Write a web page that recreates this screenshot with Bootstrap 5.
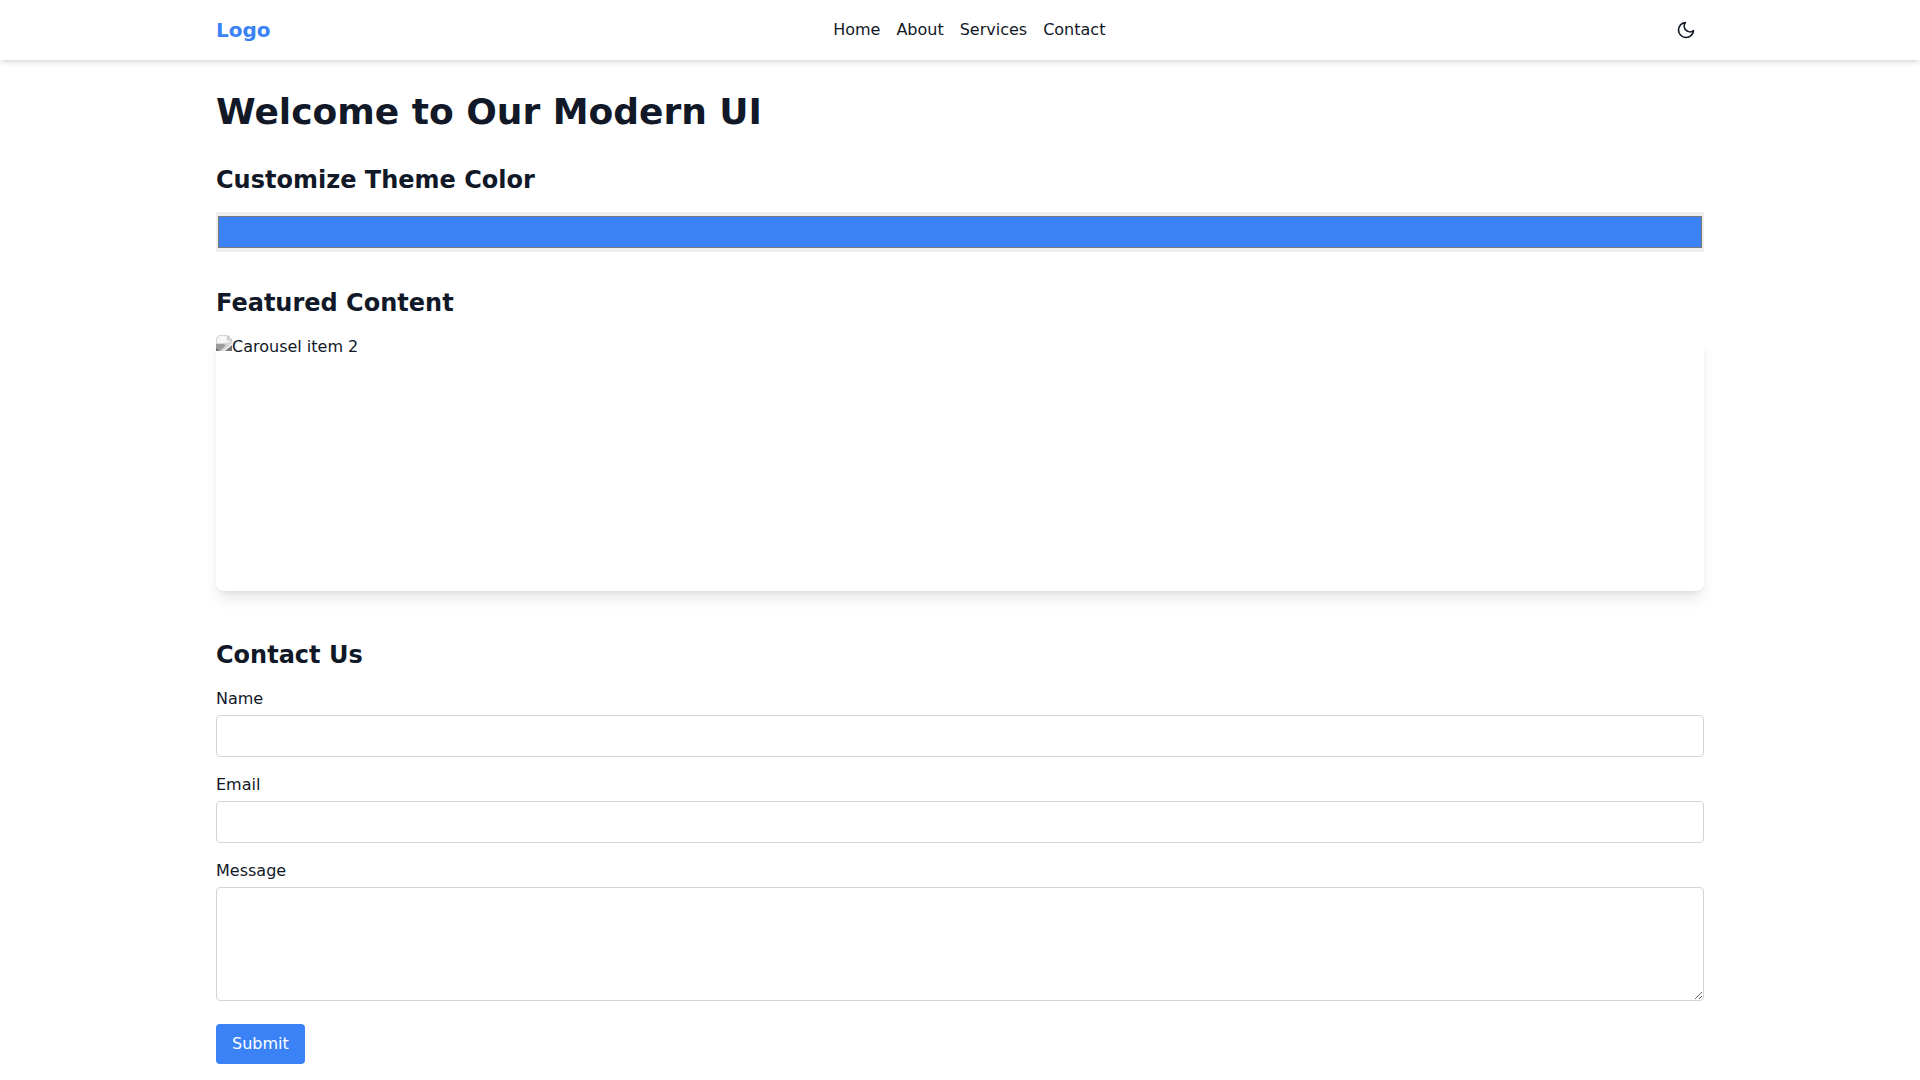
<!DOCTYPE html>
<html lang="en">
<head>
    <meta charset="UTF-8">
    <meta name="viewport" content="width=device-width, initial-scale=1.0">
    <title>Modern UI</title>
    <link href="https://cdn.jsdelivr.net/npm/bootstrap@5.3.0/dist/css/bootstrap.min.css" rel="stylesheet">
    <style>
        body {
            font-family: "DejaVu Sans", sans-serif;
            font-size: 16px;
            line-height: 24px;
            color: #111827;
            background-color: #fff;
        }
        .page-wrap {
            width: 100%;
            max-width: 1536px;
            margin: 0 auto;
            padding: 0 24px;
        }
        .top-bar {
            height: 60px;
            padding: 0;
            background-color: #fff;
            box-shadow: 0 4px 6px -1px rgba(0, 0, 0, 0.1), 0 2px 4px -2px rgba(0, 0, 0, 0.1);
        }
        .brand-logo {
            font-size: 20px;
            line-height: 28px;
            font-weight: 700;
            color: #3b82f6;
            padding: 0;
            margin: 0;
        }
        .top-links {
            gap: 16px;
        }
        .top-links .nav-link {
            padding: 0;
            color: #111827;
        }
        .theme-toggle {
            padding: 8px;
            border: 0;
            background: none;
            line-height: 0;
            color: #111827;
        }
        .main-area {
            padding-top: 32px;
            padding-bottom: 16px;
        }
        .page-title {
            font-size: 36px;
            line-height: 40px;
            font-weight: 700;
            margin-bottom: 32px;
        }
        .block-title {
            font-size: 24px;
            line-height: 32px;
            font-weight: 700;
            margin-bottom: 16px;
        }
        .theme-picker {
            display: block;
            width: 100%;
            height: 40px;
            margin-bottom: 35px;
            padding: 4px 2px;
            border: 0;
            background-color: #efefef;
            cursor: pointer;
        }
        .slide-box {
            height: 256px;
            margin-bottom: 48px;
            border-radius: 8px;
            background-color: #fff;
            box-shadow: 0 10px 15px -3px rgba(0, 0, 0, 0.1), 0 4px 6px -4px rgba(0, 0, 0, 0.1);
        }
        .broken-pic {
            flex: none;
            display: block;
        }
        .field-block {
            margin-bottom: 16px;
        }
        .field-block .form-label {
            margin-bottom: 4px;
        }
        .field-block .form-control {
            height: 42px;
            padding: 8px 12px;
            border-color: #d1d5db;
            border-radius: 4px;
            font-size: 16px;
            line-height: 24px;
            color: #111827;
        }
        .field-block textarea.form-control {
            height: 114px;
        }
        .last-field {
            margin-bottom: 23px;
        }
        .submit-btn {
            display: block;
            height: 40px;
            padding: 8px 16px;
            border: 0;
            border-radius: 4px;
            font-size: 16px;
            line-height: 24px;
            color: #fff;
            background-color: #3b82f6;
        }
    </style>
</head>
<body>
    <nav class="navbar top-bar">
        <div class="page-wrap d-flex align-items-center justify-content-between">
            <a class="navbar-brand brand-logo" href="#">Logo</a>
            <ul class="nav top-links">
                <li class="nav-item"><a class="nav-link" href="#">Home</a></li>
                <li class="nav-item"><a class="nav-link" href="#">About</a></li>
                <li class="nav-item"><a class="nav-link" href="#">Services</a></li>
                <li class="nav-item"><a class="nav-link" href="#">Contact</a></li>
            </ul>
            <button class="theme-toggle" type="button" aria-label="Toggle theme">
                <svg width="20" height="20" viewBox="0 0 24 24" fill="none" stroke="currentColor" stroke-width="2" stroke-linecap="round" stroke-linejoin="round">
                    <path d="M21 12.79A9 9 0 1 1 11.21 3 7 7 0 0 0 21 12.79z"/>
                </svg>
            </button>
        </div>
    </nav>

    <main class="page-wrap main-area">
        <h1 class="page-title">Welcome to Our Modern UI</h1>

        <h2 class="block-title">Customize Theme Color</h2>
        <input class="theme-picker" type="color" value="#3b82f6" aria-label="Theme color">

        <h2 class="block-title">Featured Content</h2>
        <div class="slide-box d-flex align-items-start">
            <svg class="broken-pic" width="16" height="16" viewBox="0 0 16 16">
                <path d="M0 16V3L3 0H12L16 5V8L8 16Z" fill="#d4d4d4"/>
                <path d="M1 8V3.5L3.5 1H11V5.5H15V7L8 8L5 8Z" fill="#f6f6f6"/>
                <path d="M12 1L15.5 5H12Z" fill="#fff" stroke="#a9a9a9" stroke-width="0.7"/>
                <path d="M0 9H7L10 10L4 16H0Z" fill="#9a9a9a"/>
                <path d="M0 13L3 16H0Z" fill="#6e6e6e"/>
                <path d="M9 16L16 10V16Z" fill="#757575"/>
            </svg>
            <span>Carousel item 2</span>
        </div>

        <h2 class="block-title">Contact Us</h2>
        <form>
            <div class="field-block">
                <label class="form-label" for="nameField">Name</label>
                <input class="form-control" id="nameField" type="text">
            </div>
            <div class="field-block">
                <label class="form-label" for="emailField">Email</label>
                <input class="form-control" id="emailField" type="email">
            </div>
            <div class="field-block last-field">
                <label class="form-label" for="messageField">Message</label>
                <textarea class="form-control" id="messageField" rows="4"></textarea>
            </div>
            <button class="btn submit-btn" type="submit">Submit</button>
        </form>
    </main>

    <script src="https://cdn.jsdelivr.net/npm/bootstrap@5.3.0/dist/js/bootstrap.bundle.min.js"></script>
</body>
</html>
